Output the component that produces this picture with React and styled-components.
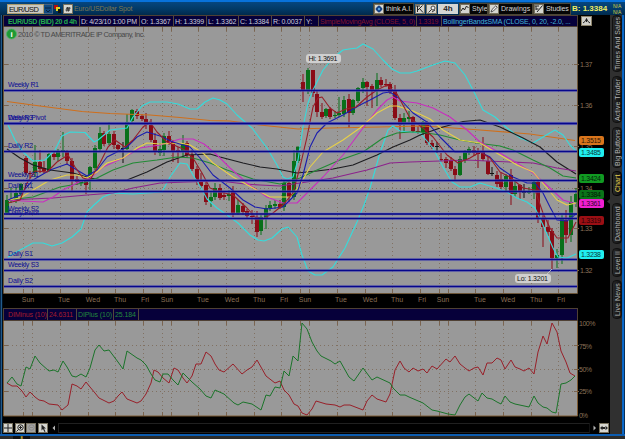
import React, { useState } from 'react';
import styled, { createGlobalStyle } from 'styled-components';

const GlobalStyle = createGlobalStyle`
  html, body {
    margin: 0;
    padding: 0;
    background: #000;
    overflow: hidden;
  }

  * {
    box-sizing: border-box;
  }

  body, text {
    font-family: "Liberation Sans", Arial, sans-serif;
  }
`;

const Window = styled.div`
  display: flex;
  flex-direction: column;
  width: 625px;
  height: 439px;
  background: #000;
  font-size: 7px;
  white-space: nowrap;
`;

const Toolbar = styled.div`
  display: flex;
  align-items: center;
  height: 15px;
  padding: 0 0 0 3px;
  border-top: 2px solid #0872dc;
  background: linear-gradient(#06467f, #023864 60%, #012a4c);
`;

const SymbolInput = styled.div`
  width: 37px;
  height: 10px;
  margin-left: 4px;
  padding-left: 1px;
  line-height: 9px;
  font-size: 7.5px;
  letter-spacing: -0.65px;
  color: #111;
  background: #c9c8c2;
  border: 1px solid #a89a6c;
`;

const DropButton = styled.div`
  width: 9px;
  height: 10px;
  background: #114a80;
  border: 1px solid #49627c;
  border-left: 0;

  svg {
    display: block;
  }
`;

const LinkIcon = styled.svg`
  width: 7px;
  height: 8px;
  margin: 0 2px 0 1px;
`;

const IconBox = styled.div`
  display: flex;
  align-items: center;
  justify-content: center;
  flex-shrink: 0;
  width: ${(props) => props.$width || 10}px;
  height: 10px;
  margin-right: ${(props) => props.$gap || 0}px;
  background: ${(props) => (props.$dim ? '#a3a3a0' : '#d6d6d0')};
  border: 1px solid #77715e;

  svg {
    display: block;
    flex-shrink: 0;
  }
`;

const SymbolName = styled.div`
  flex: 1;
  margin-left: 1px;
  font-size: 7px;
  letter-spacing: -0.15px;
  color: #7d7750;
`;

const ToolButton = styled.div`
  display: flex;
  align-items: center;
  width: ${(props) => props.$width}px;
  height: 10px;
  margin-right: 2px;
  color: #d6d6d6;
  background: #050505;
  outline: 1px solid #4b4637;
  outline-offset: -0.5px;
  font-size: 7px;
  letter-spacing: ${(props) => props.$spacing || 0}px;
`;

const ButtonLabel = styled.span`
  margin-left: 2px;
`;

const Period = styled.div`
  width: 20px;
  height: 10px;
  margin: 0 2px 0 1px;
  line-height: 10px;
  text-align: center;
  font-size: 8px;
  font-weight: bold;
  color: #222;
  background: #d4d5d3;
`;

const Bid = styled.div`
  width: 41px;
  font-size: 8px;
  font-weight: bold;
  letter-spacing: 0;
  color: #f2ee62;
`;

const NoValues = styled.div`
  width: 12px;
  line-height: 6px;
  font-size: 5px;
  color: #d8d440;
`;

const Body = styled.div`
  display: flex;
  height: 419px;
`;

const Edge = styled.div`
  width: 3px;
  background: linear-gradient(90deg, #08284a 0, #08284a 1px, #215a8b 1px, #215a8b 2px, #02101d 2px);
`;

const RightEdge = styled.div`
  width: 3px;
  background: linear-gradient(90deg, #0862bd 0, #0d6cd0 2px, #072e57 2px);
`;

const Main = styled.div`
  display: flex;
  flex-direction: column;
  width: 607px;
`;

const HeaderRow = styled.div`
  display: flex;
  align-items: flex-start;
  height: ${(props) => props.$height}px;
`;

const Header = styled.div`
  display: flex;
  width: 575px;
  height: ${(props) => props.$height}px;
  background: #06003a;
  border: 1px solid #4f4034;
`;

const HeaderCell = styled.div`
  flex-shrink: 0;
  width: ${(props) => props.$width}px;
  padding-left: ${(props) => props.$pad || 1}px;
  line-height: 11px;
  color: ${(props) => props.$color || '#cdcddb'};
  font-weight: ${(props) => (props.$bold ? 'bold' : 'normal')};
  letter-spacing: ${(props) => props.$spacing || 0}px;
  border-right: ${(props) => (props.$last ? 0 : '1px solid #54473c')};
`;

const ExpandButton = styled.div`
  width: 11px;
  height: 10px;
  margin: 1px 0 0 3px;
  background: #d0cfc9;
  border: 1px solid #8c836a;

  svg {
    display: block;
  }
`;

const Chart = styled.svg`
  display: block;
  width: 607px;
  height: ${(props) => props.$height}px;
`;

const BottomBar = styled.div`
  display: flex;
  align-items: center;
  height: 12px;
`;

const ScrollTrack = styled.div`
  flex: 1;
  height: 10px;
  background: #000;
  border: 1px solid #202020;
  border-right-color: #111;
`;

const ScrollArrow = styled.svg`
  width: 9px;
  height: 10px;
`;

const Side = styled.div`
  display: flex;
  flex-direction: column;
  width: 12px;
  background: #303030;
`;

const SideTab = styled.div`
  display: flex;
  align-items: center;
  justify-content: center;
  width: 10px;
  height: ${(props) => props.$height}px;
  margin: ${(props) => props.$gap}px 0 0 2px;
  writing-mode: vertical-rl;
  transform: rotate(180deg);
  font-size: 7px;
  letter-spacing: 0.06px;
  color: ${(props) => (props.$active ? '#e6cf4f' : '#b4b4b4')};
  background: linear-gradient(90deg, #101010, #292929);
  border: 1px solid ${(props) => (props.$active ? '#060606' : '#111')};
  border-radius: 4px;
`;

const Footer = styled.div`
  height: 5px;
  padding-left: 13px;
  border-top: 2px solid #0c5caf;
  background: #2c2c2a;
`;

const FooterTab = styled.div`
  width: 17px;
  height: 3px;
  text-align: center;
  font-size: 4px;
  line-height: 3px;
  font-weight: bold;
  color: #d9c43c;
  background: #111;
`;

const gridX = [23.5, 32.5, 60.5, 88.5, 115.5, 143.5, 162.5, 171.5, 198.5, 226.5, 254.5, 281.5, 300.5, 309.5, 337.5, 365.5, 392.5, 420.5, 439.5, 448.5, 475.5, 503.5, 531.5, 558.5];
const gridY = [64.5, 105.5, 146.5, 188.5, 228.5, 270.5];

const levels = [
    [90.5, 'Weekly R1', 31],
    [123.5, 'Weekly Pivot', 38],
    [123.5, 'Daily R3', 25],
    [151.5, 'Daily R2', 25],
    [180.5, 'Weekly S1', 31],
    [191.5, 'Daily R1', 25],
    [214, 'Weekly S2', 31],
    [218.5, 'Daily Pivot', 31],
    [259.5, 'Daily S1', 25],
    [270.5, 'Weekly S3', 31],
    [286.5, 'Daily S2', 25],
];

const days = [
    [28, 'Sun'], [64, 'Tue'], [93, 'Wed'], [120, 'Thu'], [145, 'Fri'], [167, 'Sun'],
    [203, 'Tue'], [232, 'Wed'], [259, 'Thu'], [284, 'Fri'], [305, 'Sun'], [341, 'Tue'],
    [370, 'Wed'], [397, 'Thu'], [422, 'Fri'], [443, 'Sun'], [480, 'Tue'], [508, 'Wed'],
    [536, 'Thu'], [561, 'Fri'],
];

// x, high, body top, body bottom, low, colour (g up, r down, k flat)
const candles = [
    [7, 195, 200, 213, 215, 'g'], [11, 188, 199, 201, 203, 'g'], [16, 187, 193, 200, 203, 'g'], [21, 183, 184, 194, 196, 'g'],
    [26, 156, 158, 173, 175, 'r'], [30, 171, 173, 174, 178, 'r'], [35, 145, 162, 173, 177, 'g'], [40, 150, 162, 169, 173, 'r'],
    [44, 161, 168, 171, 173, 'r'], [49, 153, 154, 171, 172, 'g'], [54, 152, 154, 157, 160, 'r'], [58, 149, 152, 157, 161, 'g'],
    [63, 132, 150, 151, 157, 'g'], [67, 150, 151, 161, 165, 'r'], [72, 158, 161, 180, 191, 'r'], [77, 176, 179, 182, 185, 'r'],
    [81, 180, 181, 183, 186, 'g'], [86, 179, 181, 185, 194, 'r'], [90, 166, 167, 181, 190, 'g'], [95, 145, 148, 168, 170, 'g'],
    [100, 127, 133, 149, 151, 'g'], [104, 131, 133, 144, 146, 'r'], [109, 122, 134, 143, 145, 'g'], [114, 131, 134, 145, 149, 'r'],
    [118, 144, 145, 149, 151, 'r'], [123, 142, 148, 149, 163, 'k'], [127, 114, 122, 149, 150, 'g'], [132, 109, 110, 121, 123, 'g'],
    [137, 109, 111, 116, 119, 'r'], [142, 114, 116, 119, 121, 'r'], [146, 113, 119, 125, 129, 'r'], [151, 119, 125, 140, 142, 'r'],
    [155, 133, 140, 151, 155, 'r'], [160, 143, 149, 153, 156, 'g'], [164, 133, 136, 150, 156, 'g'], [169, 131, 136, 142, 145, 'r'],
    [173, 140, 142, 151, 162, 'r'], [178, 147, 150, 151, 163, 'r'], [183, 135, 144, 151, 157, 'g'], [187, 141, 143, 155, 158, 'r'],
    [192, 150, 155, 169, 171, 'r'], [197, 166, 169, 180, 185, 'r'], [201, 173, 182, 186, 188, 'r'], [206, 182, 185, 202, 205, 'r'],
    [211, 192, 197, 201, 207, 'g'], [215, 183, 188, 197, 200, 'g'], [220, 184, 188, 198, 200, 'r'], [224, 191, 195, 197, 200, 'r'],
    [229, 190, 194, 196, 201, 'g'], [233, 186, 192, 213, 217, 'r'], [238, 200, 205, 213, 215, 'g'], [243, 203, 206, 212, 215, 'r'],
    [247, 209, 211, 216, 218, 'r'], [252, 210, 216, 217, 224, 'r'], [257, 211, 217, 232, 237, 'r'], [261, 215, 217, 231, 235, 'g'],
    [266, 205, 208, 218, 229, 'g'], [270, 201, 205, 208, 211, 'g'], [275, 200, 204, 206, 209, 'g'], [280, 200, 204, 207, 209, 'r'],
    [284, 181, 183, 207, 211, 'g'], [289, 182, 183, 197, 202, 'r'], [294, 150, 161, 197, 200, 'g'], [298, 146, 147, 161, 163, 'g'],
    [303, 74, 82, 90, 102, 'r'], [308, 68, 70, 91, 94, 'g'], [313, 70, 70, 93, 97, 'r'], [317, 91, 94, 112, 117, 'r'],
    [322, 103, 112, 117, 119, 'r'], [326, 108, 109, 116, 118, 'g'], [330, 107, 109, 117, 119, 'r'], [335, 111, 115, 116, 118, 'g'],
    [339, 97, 113, 115, 117, 'g'], [344, 96, 100, 114, 117, 'g'], [349, 94, 99, 113, 128, 'r'], [353, 99, 100, 113, 115, 'g'],
    [358, 87, 88, 101, 103, 'g'], [363, 78, 82, 88, 93, 'g'], [367, 81, 82, 87, 106, 'r'], [372, 84, 86, 90, 108, 'r'],
    [377, 73, 80, 90, 106, 'g'], [381, 77, 80, 85, 87, 'r'], [386, 79, 84, 85, 87, 'r'], [390, 82, 84, 92, 94, 'r'],
    [395, 85, 90, 118, 120, 'r'], [400, 114, 118, 125, 139, 'r'], [404, 113, 118, 124, 133, 'g'], [409, 111, 117, 119, 123, 'g'],
    [413, 116, 117, 131, 133, 'r'], [418, 126, 131, 132, 134, 'r'], [423, 121, 122, 132, 135, 'g'], [427, 121, 122, 143, 145, 'r'],
    [432, 140, 143, 147, 149, 'r'], [437, 142, 146, 147, 153, 'k'], [441, 153, 159, 160, 161, 'r'], [446, 157, 159, 163, 168, 'r'],
    [451, 157, 160, 169, 171, 'r'], [455, 166, 169, 175, 181, 'r'], [460, 156, 159, 175, 176, 'g'], [465, 150, 152, 160, 163, 'g'],
    [469, 147, 149, 153, 155, 'g'], [474, 146, 150, 153, 156, 'r'], [478, 148, 152, 154, 168, 'r'], [483, 137, 151, 159, 161, 'r'],
    [488, 156, 161, 174, 175, 'r'], [492, 167, 173, 174, 176, 'k'], [497, 171, 175, 184, 187, 'r'], [501, 173, 179, 187, 190, 'r'],
    [506, 174, 176, 187, 191, 'g'], [511, 169, 175, 194, 205, 'r'], [515, 181, 186, 194, 197, 'g'], [520, 184, 185, 191, 199, 'r'],
    [524, 184, 192, 193, 198, 'k'], [529, 187, 191, 193, 194, 'g'], [534, 180, 182, 191, 199, 'g'], [538, 180, 182, 219, 223, 'r'],
    [543, 214, 219, 227, 247, 'r'], [548, 220, 227, 232, 236, 'r'], [552, 228, 231, 258, 269, 'r'], [557, 249, 255, 258, 268, 'g'],
    [562, 215, 219, 255, 264, 'g'], [566, 210, 220, 235, 243, 'r'], [571, 196, 202, 235, 242, 'g'], [576, 188, 194, 202, 207, 'g'],
];

const candleColors = { g: '#08701a', r: '#8a0b16', k: '#111111' };

const studies = [
    ['#cf6f1c', '7,101.5 40,106 82,111.5 110,113.5 150,115 180,117.5 210,120.5 230,121 260,125 298,129 330,128 380,127 420,126 440,127 480,130 530,134 575,140.5'],
    ['#35dcdc', '8,125 15,140 23,152 33,161 45,160 55,150 62,136 70,132 85,132.5 94,142 98,140 110,130 127,128 133,117 142,106 150,102 167,102 178,104 190,109 197,109 205,102 213,98 220,100 227,104 237,115 252,128 267,148 277,165 283,177 287,179 293,177 298,160 303,127 308,103 313,90 323,70 333,58 343,50 349,49 357,48 363,44 373,49 383,60 392,69 400,73 410,73 417,71 433,65 445,61 455,63 465,75 473,90 483,110 495,117 507,128 520,138 533,143 543,137 555,130 563,135 570,145 576,151'],
    ['#35dcdc', '8,257 20,250 33,243 43,243 52,246 62,243 72,237 81,229 87,212 94,205 103,197 113,193 133,194 162,192 170,177 180,163 187,164 193,175 200,186 207,199 217,208 227,215 238,223 250,235 258,240 264,241 272,238 282,229 288,227 297,237 302,255 308,271 315,275 322,275 333,267 345,248 357,222 364,205 370,188 380,153 388,130 393,126 400,131 420,133 433,148 443,167 452,182 460,187 470,187 480,183 493,187 507,192 517,198 527,202 535,208 543,225 553,248 558,257 567,258 576,254'],
    ['#1c1c20', '7,149 20,158 33,165 50,170 73,173 90,178 103,180 127,180 147,172 167,162 187,155 210,154 220,157 243,163 260,167 277,169 297,173 317,171 333,169 353,165 377,155 393,147 410,140 420,135 443,127 463,121.5 480,120 500,127 523,138 540,147 557,162 576,174'],
    ['#8c238c', '8,200 30,199 53,198 87,195 113,193 133,188 160,183 187,182 220,181 245,184 260,185 280,186 300,183 333,178 367,170 390,163 410,162 440,161 467,160 487,161 533,163 557,168 576,171'],
    ['#218a35', '8,200 33,197 60,187 83,183 97,178 113,170 133,163 157,160 177,157 193,158 210,163 227,170 253,179 280,184 300,178 317,170 340,160 363,152 383,138 397,133 410,132 420,132 440,135 460,140 477,143 500,146 513,150 533,160 550,168 563,176 576,178'],
    ['#c92ec0', '8,200 23,201 43,202 53,197 63,190 77,183 90,178 103,167 123,158 140,148 160,145 180,139 193,139 204,144 217,155 230,168 247,183 267,197 283,203 297,203 310,190 323,177 343,155 360,132 377,110 387,100 393,97 400,101 417,103 433,108 450,117 467,130 480,142 500,153 517,163 533,173 550,188 563,200 576,204'],
    ['#e7d04a', '8,200 20,198 33,190 50,180 67,175 77,175 87,178 97,172 107,163 123,158 137,148 147,143 160,144 180,143 190,145 203,153 213,163 233,177 253,188 270,197 290,197 300,185 310,167 323,152 343,140 360,128 377,113 390,106 397,106 413,111 430,119 443,130 460,140 480,143 500,155 517,165 533,172 547,188 557,200 567,205 576,203'],
    ['#1a1dae', '8,200 20,195 33,180 50,170 67,164 77,170 87,176 97,170 107,157 117,152 127,147 137,137 147,132 160,136 173,142 190,147 200,158 213,175 230,188 243,200 255,207 267,209 283,207 297,193 303,175 310,147 317,133 327,123 343,115 360,105 370,100 383,93 390,92 400,99 413,113 427,122 440,137 455,152 467,152 480,152 490,157 500,168 513,177 527,183 535,183 543,193 550,207 557,220 567,221 576,214'],
    ['#981c27', '8,203 20,200 27,183 35,171 47,172 57,162 68,155 75,167 83,178 90,180 100,163 108,147 115,140 125,147 133,140 143,127 150,122 157,132 167,142 183,149 193,158 202,173 210,188 220,192 233,195 247,208 255,217 263,219 273,213 283,205 293,193 300,167 307,137 313,107 318,98 322,97 330,108 337,113 346,109 356,107 367,97 377,90 387,85 397,94 410,118 423,128 433,137 447,155 458,163 470,158 480,152 490,158 500,172 510,177 523,188 535,190 543,213 550,228 557,238 568,238 576,222'],
];

const diMinus = '7,383 12,386 17,386 22,391 26,397 30,392 35,397 39,400 44,401 49,404 58,405 62,410 68,405 72,384 77,386 81,389 86,382 90,387 95,393 99,398 109,403 114,401 118,396 122,392 127,399 137,403 141,401 146,394 151,383 154,370 158,372 163,378 169,383 174,368 178,370 183,378 187,383 192,376 196,364 201,364 206,352 211,356 215,364 219,370 224,372 233,364 242,374 247,370 252,367 257,360 266,376 275,383 280,381 284,390 289,395 294,404 298,406 302,413 307,415 312,409 316,401 326,404 335,405 340,407 344,405 350,405 363,410 367,401 372,395 377,399 386,402 390,394 395,370 400,361 404,368 409,372 413,368 418,371 423,369 427,373 432,366 437,369 446,359 450,362 455,356 460,364 465,368 469,371 474,368 478,367 483,375 487,363 492,363 497,358 501,360 505,369 511,360 515,367 520,369 524,371 529,368 534,374 538,352 543,336 547,344 552,323 557,332 561,351 566,362 570,373 575,376';
const diPlus = '7,383 12,377 17,384 21,386 26,367 30,369 35,356 40,363 49,371 54,370 58,372 63,361 67,367 72,376 76,377 81,374 86,377 90,368 95,350 99,345 104,351 109,350 118,362 123,369 127,351 137,358 141,360 146,365 151,374 155,380 160,382 163,374 168,374 173,380 178,385 183,373 192,382 200,389 206,396 211,398 215,390 224,394 234,403 238,405 243,402 252,404 261,410 266,395 270,396 275,387 280,388 284,371 289,376 293,356 298,361 302,323 307,329 312,342 317,351 321,356 331,361 335,364 340,361 349,377 354,381 363,368 372,380 377,377 390,383 393,388 400,395 405,395 409,397 423,403 432,410 437,411 448,414 455,415 460,405 465,397 469,394 478,401 482,393 487,398 492,399 497,402 501,404 505,396 510,402 515,404 529,407 534,396 538,403 543,407 547,408 552,412 556,413 561,384 566,383 571,380 575,376';

const priceTags = [
    [140.5, '1.3515', '#d9751c', '#2e1605'],
    [152.5, '1.3485', '#20eeee', '#063a3a'],
    [178.5, '1.3424', '#119a22', '#03240a'],
    [194.5, '1.3384', '#0b7419', '#021a06'],
    [203.5, '1.3361', '#f01fd0', '#33042c'],
    [220.5, '1.3319', '#9b0f14', '#2a0205'],
    [254.5, '1.3238', '#20eeee', '#063a3a'],
];

const sideTabs = [
    ['Times And Sales', 57, 0],
    ['Active Trader', 47, 4],
    ['Big Buttons', 41, 4],
    ['Chart', 25, 3],
    ['Dashboard', 41, 7],
    ['Level II', 29, 4],
    ['Live News', 39, 3],
];

const Grid = ({ top, bottom, rows }) => (
    <g stroke="#7a6450" strokeWidth="1" shapeRendering="crispEdges">
        {gridX.map((x) => (
            <React.Fragment key={x}>
                <line x1={x} x2={x} y1={top} y2={bottom} strokeDasharray="1 3" opacity="0.75" />
                <line x1={x} x2={x} y1={top} y2={top + 4} />
                <line x1={x} x2={x} y1={bottom - 4} y2={bottom} />
            </React.Fragment>
        ))}
        {rows.map((y) => (
            <React.Fragment key={y}>
                <line x1="4" x2="577" y1={y} y2={y} strokeDasharray="1 3" opacity="0.75" />
                <line x1="4" x2="8" y1={y} y2={y} />
                <line x1="574" x2="579" y1={y} y2={y} />
            </React.Fragment>
        ))}
    </g>
);

const PriceChart = () => (
    <Chart $height={281} viewBox="3 27 607 281">
        <rect x="4" y="27" width="573" height="266" fill="#999999" />
        <Grid top={27} bottom={293} rows={gridY} />
        <circle cx="11.5" cy="34" r="5" fill="#1d9a35" stroke="#51b563" strokeWidth="0.8" />
        <text x="11.5" y="37" fontSize="8" fontWeight="bold" textAnchor="middle" fill="#fff">i</text>
        <text x="18" y="37" fontSize="7.4" textLength="127" fill="#484848">2010 © TD AMERITRADE IP Company, Inc.</text>

        {candles.map(([x, high, top, bottom, low, c]) => (
            <g key={x} fill={candleColors[c]}>
                <rect x={x - 0.5} y={high} width="1" height={low - high} />
                <rect x={x - 2} y={top} width="4" height={Math.max(bottom - top, 1)} />
            </g>
        ))}

        {studies.map(([color, points], i) => (
            <polyline key={i} points={points} fill="none" stroke={color} strokeWidth="1.1" strokeLinejoin="round" />
        ))}

        {levels.map(([y, name, width]) => (
            <g key={name}>
                <rect x="4" y={y - 1.6} width="573" height="3.2" fill="#7878c4" opacity="0.5" />
                <rect x="4" y={y - 0.8} width="573" height="1.6" fill="#06068c" />
                <text x="8" y={y - 3.5} fontSize="7" textLength={width} fill="#0c0c96">{name}</text>
            </g>
        ))}

        <rect x="306" y="54" width="35" height="9" rx="3" fill="#cfcfcf" />
        <text x="308.5" y="61.2" fontSize="7" textLength="29" fill="#111">Hi: 1.3691</text>
        <path d="M546 275 L552 269" stroke="#cfcfcf" strokeWidth="0.8" />
        <rect x="515" y="274" width="36" height="9" rx="3" fill="#cfcfcf" />
        <text x="517" y="281.2" fontSize="7" textLength="31" fill="#111">Lo: 1.3201</text>

        <path d="M3.5 27 V293.5 H577.5 V27" fill="none" stroke="#6c5538" />

        {gridY.map((y, i) => (
            <text key={y} x="580" y={y + 2.5} fontSize="7" textLength="12.5" fill="#8a7056">
                {(1.37 - i * 0.01).toFixed(2)}
            </text>
        ))}
        {priceTags.map(([y, value, fill, color]) => (
            <g key={value}>
                <rect x="579" y={y - 4.5} width="25" height="9" rx="2" fill={fill} />
                <text x="581" y={y + 2.5} fontSize="7" textLength="20" fill={color}>{value}</text>
            </g>
        ))}
        <path d="M610 199 v5 l-3 -2.5z" fill="#333" />
        {days.map(([x, name]) => (
            <text key={x} x={x} y="302" fontSize="7" textAnchor="middle" fill="#8a7056">{name}</text>
        ))}
    </Chart>
);

const DirectionalChart = () => (
    <Chart $height={101} viewBox="3 321 607 101">
        <rect x="4" y="321" width="573" height="95" fill="#999999" />
        <Grid top={321} bottom={416} rows={[345.5, 369.5, 391.5]} />
        <polyline points={diMinus} fill="none" stroke="#982029" strokeWidth="1" />
        <polyline points={diPlus} fill="none" stroke="#1b742a" strokeWidth="1" />
        <path d="M3.5 321 V416 H577.5 V321" fill="none" stroke="#7d5b32" />
        {[[323.5, '100%', 16.5], [346, '75%', 13], [369.5, '50%', 13], [391.5, '25%', 13], [415, '0%', 9]].map(([y, label, width]) => (
            <text key={label} x="579" y={y + 2.8} fontSize="7" textLength={width} fill="#8a7056">{label}</text>
        ))}
    </Chart>
);

const App = () => {
    const [activeTab, setActiveTab] = useState('Chart');

    return (
        <Window>
            <GlobalStyle />
            <Toolbar>
                <SymbolInput>EUR/USD</SymbolInput>
                <DropButton>
                    <svg width="8" height="8" viewBox="0 0 8 8"><path d="M1 3 H7 M2 5 L4 7 L6 5" stroke="#061f3c" fill="none" /></svg>
                </DropButton>
                <LinkIcon viewBox="0 0 7 8">
                    <rect width="4" height="4" fill="#b60c0c" />
                    <rect x="2" y="2" width="4" height="4" fill="#e2d31f" />
                    <rect x="4" y="4" width="3" height="4" fill="#111" />
                </LinkIcon>
                <IconBox>
                    <svg width="8" height="8" viewBox="0 0 8 8"><path d="M2 3.2 H6.5 M1.5 5 H6 M3.5 2 L2.8 6.5 M5.2 2 L4.5 6.5" stroke="#222" strokeWidth="0.9" /></svg>
                </IconBox>
                <SymbolName>Euro/USDollar Spot</SymbolName>
                <ToolButton $width={39} $spacing={-0.1}>
                    <IconBox>
                        <svg width="8" height="8" viewBox="0 0 8 8">
                            <path d="M4 0.3 L7.7 4 L4 7.7 L0.3 4z" fill="#143f84" />
                            <circle cx="4" cy="4" r="2.7" fill="#143f84" />
                            <circle cx="4" cy="4" r="1.2" fill="#58a7e6" />
                        </svg>
                    </IconBox>
                    <ButtonLabel>think A.I.</ButtonLabel>
                </ToolButton>
                <IconBox $gap={1}>
                    <svg width="8" height="8" viewBox="0 0 8 8"><path d="M0 1 H4 M1.5 1 V7 M6.5 0.5 L2 5 M3 3 L7 7.5" stroke="#222" fill="none" /></svg>
                </IconBox>
                <IconBox $width={11}>
                    <svg width="8" height="8" viewBox="0 0 8 8"><circle cx="5" cy="3" r="2" stroke="#444" fill="#eee" /><path d="M3.5 4.5 L0.5 7.5 M4 7 L7 5" stroke="#333" /></svg>
                </IconBox>
                <Period>4h</Period>
                <ToolButton $width={27}>
                    <IconBox><svg width="8" height="8" viewBox="0 0 8 8"><path d="M0 6 L2 3 L3.5 5 L5.5 1 L7.5 3" stroke="#222" fill="none" /></svg></IconBox>
                    <ButtonLabel>Style</ButtonLabel>
                </ToolButton>
                <ToolButton $width={43}>
                    <IconBox><svg width="8" height="8" viewBox="0 0 8 8"><path d="M1 7 L2 4.5 L5.8 0.8 L7.2 2.2 L3.4 6z" stroke="#333" strokeWidth="0.8" fill="#eee" /></svg></IconBox>
                    <ButtonLabel>Drawings</ButtonLabel>
                </ToolButton>
                <ToolButton $width={36} $spacing={-0.1}>
                    <IconBox><svg width="8" height="8" viewBox="0 0 8 8"><path d="M0 1 H4 M1 1 V5 M7.5 0.5 L2 7 M1 4 L3.5 4" stroke="#222" fill="none" /></svg></IconBox>
                    <ButtonLabel>Studies</ButtonLabel>
                </ToolButton>
                <Bid>B: 1.3384</Bid>
                <NoValues>N/A<br />N/A</NoValues>
            </Toolbar>

            <Body>
                <Edge />
                <Main>
                    <HeaderRow $height={12}>
                        <Header $height={12}>
                            <HeaderCell $width={76} $pad={4} $bold $color="#23ad4c" $spacing={-0.36}>EUR/USD (BID) 20 d 4h</HeaderCell>
                            <HeaderCell $width={60} $spacing={-0.25}>D: 4/23/10 1:00 PM</HeaderCell>
                            <HeaderCell $width={34} $spacing={-0.15}>O: 1.3367</HeaderCell>
                            <HeaderCell $width={33} $spacing={-0.15}>H: 1.3399</HeaderCell>
                            <HeaderCell $width={32} $spacing={-0.1}>L: 1.3362</HeaderCell>
                            <HeaderCell $width={33} $spacing={-0.15}>C: 1.3384</HeaderCell>
                            <HeaderCell $width={33} $spacing={-0.15}>R: 0.0037</HeaderCell>
                            <HeaderCell $width={14}>Y:</HeaderCell>
                            <HeaderCell $width={98} $color="#82142c" $spacing={-0.24}>SimpleMovingAvg (CLOSE, 5, 0)</HeaderCell>
                            <HeaderCell $width={25} $color="#82142c" $spacing={-0.2}>1.3319</HeaderCell>
                            <HeaderCell $width={135} $last $color="#42b5d5" $spacing={-0.18}>BollingerBandsSMA (CLOSE, 0, 20, -2.0, ...</HeaderCell>
                        </Header>
                        <ExpandButton>
                            <svg width="9" height="8" viewBox="0 0 9 8"><path d="M1 6 L3.5 4 L4.5 1.5 L5.5 4 L8 6 M4.5 2 V5" stroke="#222" fill="none" /></svg>
                        </ExpandButton>
                    </HeaderRow>
                    <PriceChart />
                    <HeaderRow $height={13}>
                        <Header $height={13}>
                            <HeaderCell $width={44} $pad={4} $color="#a41c2d" $spacing={-0.12}>DIMinus (10)</HeaderCell>
                            <HeaderCell $width={29} $color="#a41c2d" $spacing={-0.1}>24.6311</HeaderCell>
                            <HeaderCell $width={37} $color="#23893d" $spacing={-0.1}>DIPlus (10)</HeaderCell>
                            <HeaderCell $width={25} $color="#23893d" $spacing={-0.1}>25.184</HeaderCell>
                        </Header>
                    </HeaderRow>
                    <DirectionalChart />
                    <BottomBar>
                        <IconBox $gap={2}><svg width="8" height="8" viewBox="0 0 8 8"><path d="M0 4 H8 M4 0 V8" stroke="#222" /></svg></IconBox>
                        <IconBox $gap={1}><svg width="8" height="8" viewBox="0 0 8 8"><circle cx="4.5" cy="3.5" r="2.7" stroke="#222" fill="none" /><path d="M2.5 5.5 L0.5 7.5 M3 3.5 H6 M4.5 2 V5" stroke="#222" /></svg></IconBox>
                        <IconBox $gap={2} $dim><svg width="8" height="8" viewBox="0 0 8 8"><circle cx="4.5" cy="3.5" r="2.7" stroke="#888" fill="none" /><path d="M3 3.5 H6" stroke="#888" /></svg></IconBox>
                        <IconBox $gap={1}><svg width="8" height="8" viewBox="0 0 8 8"><path d="M2.5 0.5 V6.5 L4 5 L5.5 8 L6.5 7.5 L5 4.5 H7z" fill="#222" /></svg></IconBox>
                        <ScrollArrow viewBox="0 0 9 10"><path d="M6 2.5 V7.5 L3.5 5z" fill="#b5b5b5" /></ScrollArrow>
                        <ScrollTrack />
                        <ScrollArrow viewBox="0 0 9 10"><path d="M3.5 2.5 V7.5 L6 5z" fill="#b5b5b5" /></ScrollArrow>
                        <IconBox $gap={1}>
                            <svg width="8" height="8" viewBox="0 0 8 8"><path d="M0 4 L2.5 1.8 V6.2z M8 4 L5.5 1.8 V6.2z M2 3 H6 V5 H2z" fill="#222" /></svg>
                        </IconBox>
                    </BottomBar>
                </Main>
                <Side>
                    {sideTabs.map(([name, height, gap]) => (
                        <SideTab key={name} $height={height} $gap={gap} $active={name === activeTab} onClick={() => setActiveTab(name)}>
                            {name}
                        </SideTab>
                    ))}
                </Side>
                <RightEdge />
            </Body>
            <Footer>
                <FooterTab>8</FooterTab>
            </Footer>
        </Window>
    );
};

export default App;
